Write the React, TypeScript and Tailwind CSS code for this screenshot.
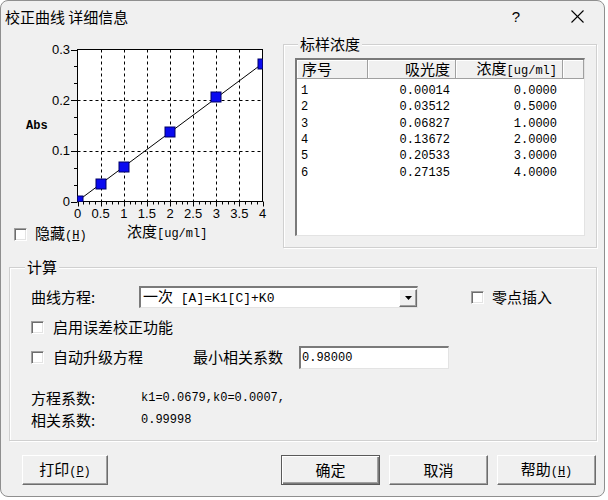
import React from "react";

const cn = "font-['Noto_Sans_CJK_SC',sans-serif] text-[15px] leading-[18px] text-black whitespace-nowrap";
const mono = "font-['Liberation_Mono',monospace] text-[12px] leading-[16px] text-black whitespace-nowrap";

function Check() {
  return (
    <span className="block w-[13px] h-[13px] shrink-0 bg-white border border-t-[#a0a0a0] border-l-[#a0a0a0] border-r-white border-b-white shadow-[inset_1px_1px_0_#6d6d6d,inset_-1px_-1px_0_#e3e3e3]" />
  );
}

function Group({
  title,
  legendClass,
  className,
  children,
}: {
  title: string;
  legendClass: string;
  className: string;
  children: React.ReactNode;
}) {
  return (
    <div className={`relative border border-[#d0d0d0] shadow-[inset_1px_1px_0_#ffffff,1px_1px_0_#ffffff] ${className}`}>
      <span className={`absolute -top-[10px] px-[2px] bg-[#f0f0f0] ${cn} ${legendClass}`}>{title}</span>
      {children}
    </div>
  );
}

function Chart() {
  const X0 = 76.5,
    X1 = 261.5,
    Y0 = 169.5,
    Y1 = 17.5;
  const px = (v: number) => X0 + (v / 4) * (X1 - X0);
  const py = (v: number) => Y0 - (v / 0.3) * (Y0 - Y1);
  const xg = [0.5, 1, 1.5, 2, 2.5, 3, 3.5];
  const yg = [0.1, 0.2];
  const pts: [number, number][] = [
    [0, 0.00014],
    [0.5, 0.03512],
    [1, 0.06827],
    [2, 0.13672],
    [3, 0.20533],
    [4, 0.27135],
  ];
  const minorY: number[] = [];
  for (let i = 0; i <= 9; i++) minorY.push(i / 30);
  const minorX: number[] = [];
  for (let i = 0; i <= 32; i++) minorX.push(i * 0.125);
  const xl = ["0", "0.5", "1", "1.5", "2", "2.5", "3", "3.5", "4"];
  return (
    <svg width={282} height={188} className="block shrink-0">
      <defs>
        <clipPath id="plotclip">
          <rect x={X0} y={Y1} width={X1 - X0} height={Y0 - Y1} />
        </clipPath>
      </defs>
      <rect x={X0} y={Y1} width={X1 - X0} height={Y0 - Y1} fill="#ffffff" />
      {xg.map((v) => (
        <line key={"gx" + v} x1={Math.round(px(v)) + 0.5} x2={Math.round(px(v)) + 0.5} y1={Y1} y2={Y0} stroke="#000" strokeDasharray="3 3" />
      ))}
      {yg.map((v) => (
        <line key={"gy" + v} x1={X0} x2={X1} y1={Math.round(py(v)) + 0.5} y2={Math.round(py(v)) + 0.5} stroke="#000" strokeDasharray="3 3" />
      ))}
      <rect x={X0} y={Y1} width={X1 - X0} height={Y0 - Y1} fill="none" stroke="#000" />
      {minorY.map((v, i) => (
        <line key={"ty" + i} x1={i % 3 === 0 ? 70 : 73} x2={X0} y1={Math.round(py(v)) + 0.5} y2={Math.round(py(v)) + 0.5} stroke="#000" />
      ))}
      {minorX.map((v, i) => (
        <line key={"tx" + i} y1={Y0} y2={i % 4 === 0 ? Y0 + 5 : Y0 + 3} x1={Math.round(px(v)) + 0.5} x2={Math.round(px(v)) + 0.5} stroke="#000" />
      ))}
      {[0, 0.1, 0.2, 0.3].map((v) => (
        <text key={"ly" + v} x={69} y={py(v)} textAnchor="end" dominantBaseline="central" fontFamily="Liberation Sans" fontSize={13} fill="#000">
          {v === 0 ? "0" : v.toFixed(1)}
        </text>
      ))}
      {xl.map((t, i) => (
        <text key={"lx" + i} x={px(i * 0.5)} y={181} textAnchor="middle" dominantBaseline="central" fontFamily="Liberation Sans" fontSize={13} fill="#000">
          {t}
        </text>
      ))}
      <text x={25} y={94} dominantBaseline="central" fontFamily="Liberation Mono" fontWeight="bold" fontSize={12} fill="#000">
        Abs
      </text>
      <g clipPath="url(#plotclip)">
        <line x1={px(0)} y1={py(0.0007)} x2={px(4)} y2={py(0.2723)} stroke="#000" />
        {pts.map(([x, y], i) => (
          <rect key={"p" + i} x={Math.round(px(x)) - 5} y={Math.round(py(y)) - 5} width={10} height={10} fill="#0a0af0" stroke="#000066" />
        ))}
      </g>
    </svg>
  );
}

function Btn({ children, def, className }: { children: React.ReactNode; def?: boolean; className: string }) {
  return (
    <div
      className={`h-[30px] flex items-center justify-center bg-[#f0f0f0] ${
        def
          ? "border border-[#5a5a5a] shadow-[inset_1px_1px_0_#ffffff,inset_-1px_-1px_0_#7a7a7a,inset_-2px_-2px_0_#a0a0a0]"
          : "border border-t-white border-l-white border-r-[#6d6d6d] border-b-[#6d6d6d] shadow-[inset_-1px_-1px_0_#a0a0a0]"
      } ${className}`}
    >
      {children}
    </div>
  );
}

const rows = [
  ["1", "0.00014", "0.0000"],
  ["2", "0.03512", "0.5000"],
  ["3", "0.06827", "1.0000"],
  ["4", "0.13672", "2.0000"],
  ["5", "0.20533", "3.0000"],
  ["6", "0.27135", "4.0000"],
];

const hcell = "h-full flex items-center border-r border-b border-r-[#a0a0a0] border-b-[#a0a0a0] shadow-[inset_1px_1px_0_#ffffff]";

export default function App() {
  return (
    <div className="w-[608px] h-[500px] bg-white overflow-hidden">
      <div className="w-[605px] h-[497px] bg-[#f0f0f0] border border-[#8f8f8f] rounded-[8px] flex flex-col">
        {/* title bar */}
        <div className="h-[31px] shrink-0 flex items-center">
          <span className={`${cn} ml-[4px]`}>校正曲线 详细信息</span>
          <div className="flex-1" />
          <span className="w-[10px] text-center font-['Liberation_Sans',sans-serif] text-[15px] leading-[18px] text-black">?</span>
          <div className="w-[50px]" />
          <svg width={13} height={13} className="mr-[20px] block">
            <line x1={0.5} y1={0.5} x2={12.5} y2={12.5} stroke="#000" strokeWidth={1.1} />
            <line x1={12.5} y1={0.5} x2={0.5} y2={12.5} stroke="#000" strokeWidth={1.1} />
          </svg>
        </div>

        {/* top section */}
        <div className="flex h-[216px] shrink-0">
          <div className="w-[282px] flex flex-col">
            <Chart />
            <div className="flex items-start">
              <div className="w-[126px] flex items-center mt-[4px] pl-[13px]">
                <Check />
                <span className={`${cn} ml-[8px]`}>
                  隐藏<span className={mono}>(<u>H</u>)</span>
                </span>
              </div>
              <span className={`${cn} mt-[2px]`}>
                浓度<span className={mono}>[ug/ml]</span>
              </span>
            </div>
          </div>
          <Group title="标样浓度" legendClass="left-[14px]" className="mt-[12px] w-[314px] h-[204px]">
            <div className="ml-[11px] mt-[13px] w-[290px] h-[178px] bg-white border-l-2 border-t-2 border-l-[#7a7a7a] border-t-[#7a7a7a] border-r border-b border-r-[#e3e3e3] border-b-[#e3e3e3] flex flex-col overflow-hidden">
              <div className="h-[19px] flex bg-[#f0f0f0] shrink-0">
                <div className={`${hcell} w-[71px] pl-[5px]`}>
                  <span className={cn}>序号</span>
                </div>
                <div className={`${hcell} w-[88px] justify-end pr-[5px]`}>
                  <span className={cn}>吸光度</span>
                </div>
                <div className={`${hcell} w-[107px] justify-end pr-[5px]`}>
                  <span className={cn}>
                    浓度<span className={mono}>[ug/ml]</span>
                  </span>
                </div>
                <div className={`${hcell} flex-1`} />
              </div>
              <div className="pt-[4px] flex flex-col">
                {rows.map((r) => (
                  <div key={r[0]} className="h-[16.3px] flex items-center">
                    <div className={`w-[71px] pl-[4px] ${mono}`}>{r[0]}</div>
                    <div className={`w-[88px] pr-[6px] text-right ${mono}`}>{r[1]}</div>
                    <div className={`w-[107px] pr-[6px] text-right ${mono}`}>{r[2]}</div>
                  </div>
                ))}
              </div>
            </div>
          </Group>
        </div>

        {/* calc group */}
        <Group title="计算" legendClass="left-[15px]" className="ml-[8px] mt-[19px] w-[588px] h-[174px] shrink-0">
          <div className="pl-[21px] pt-[18px] flex flex-col">
            <div className="h-[22px] flex items-center">
              <span className={`${cn} w-[108px]`}>曲线方程:</span>
              <div className="w-[279px] h-[22px] bg-white border-l-2 border-t-2 border-l-[#7a7a7a] border-t-[#7a7a7a] border-r border-b border-r-[#e3e3e3] border-b-[#e3e3e3] flex items-center pl-[2px]">
                <span className={cn}>
                  一次<span className="font-['Liberation_Mono',monospace] text-[13px] whitespace-pre"> [A]=K1[C]+K0</span>
                </span>
                <div className="flex-1" />
                <div className="w-[18px] h-[18px] bg-[#f0f0f0] border border-t-white border-l-white border-r-[#6d6d6d] border-b-[#6d6d6d] shadow-[inset_-1px_-1px_0_#a0a0a0] flex items-center justify-center">
                  <svg width={7} height={4} className="block">
                    <path d="M0 0 H7 L3.5 4 Z" fill="#000" />
                  </svg>
                </div>
              </div>
              <div className="ml-[53px] flex items-center">
                <Check />
                <span className={`${cn} ml-[8px]`}>零点插入</span>
              </div>
            </div>
            <div className="h-[22px] mt-[8px] flex items-center">
              <Check />
              <span className={`${cn} ml-[9px]`}>启用误差校正功能</span>
            </div>
            <div className="h-[22px] mt-[8px] flex items-center">
              <div className="w-[162px] flex items-center">
                <Check />
                <span className={`${cn} ml-[9px]`}>自动升级方程</span>
              </div>
              <span className={`${cn} w-[106px]`}>最小相关系数</span>
              <div className="w-[150px] h-[23px] bg-white border-l-2 border-t-2 border-l-[#7a7a7a] border-t-[#7a7a7a] border-r border-b border-r-[#e3e3e3] border-b-[#e3e3e3] flex items-center pl-[1px]">
                <span className={mono}>0.98000</span>
              </div>
            </div>
            <div className="h-[16px] mt-[22px] flex items-center">
              <span className={`${cn} w-[110px]`}>方程系数:</span>
              <span className={mono}>k1=0.0679,k0=0.0007,</span>
            </div>
            <div className="h-[16px] mt-[6px] flex items-center">
              <span className={`${cn} w-[110px]`}>相关系数:</span>
              <span className={mono}>0.99998</span>
            </div>
          </div>
        </Group>

        {/* buttons */}
        <div className="mt-[14px] h-[30px] flex pl-[21px] pr-[8px] shrink-0">
          <Btn className="w-[86px]">
            <span className={cn}>
              打印<span className={mono}>(<u>P</u>)</span>
            </span>
          </Btn>
          <div className="flex-1" />
          <Btn def className="w-[99px]">
            <span className={cn}>确定</span>
          </Btn>
          <Btn className="w-[99px] ml-[9px]">
            <span className={cn}>取消</span>
          </Btn>
          <Btn className="w-[99px] ml-[9px]">
            <span className={cn}>
              帮助<span className={mono}>(<u>H</u>)</span>
            </span>
          </Btn>
        </div>
      </div>
    </div>
  );
}
